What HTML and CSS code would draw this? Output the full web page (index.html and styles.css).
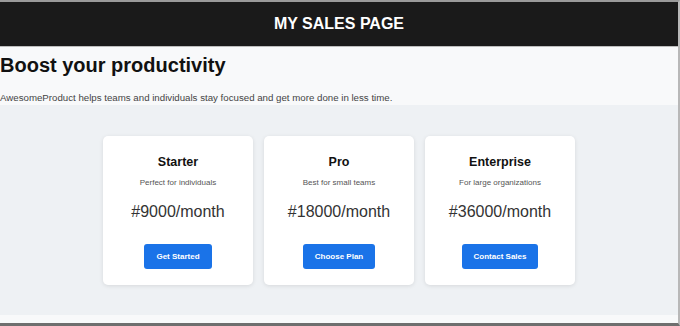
FILE: index.html
```html
<!DOCTYPE html>
<html lang="en">
<head>
<meta charset="UTF-8" />
<title>My Sales Page</title>
<link rel="stylesheet" href="styles.css">
</head>
<body>

<div class="frame">
  <header class="topbar">
    <h1>MY SALES PAGE</h1>
  </header>

  <section class="hero">
    <h2>Boost your productivity</h2>
    <p>AwesomeProduct helps teams and individuals stay focused and get more done in less time.</p>
  </section>

  <section class="pricing">
    <div class="card">
      <h3>Starter</h3>
      <p class="note">Perfect for individuals</p>
      <p class="price">#9000/month</p>
      <button>Get Started</button>
    </div>
    <div class="card">
      <h3>Pro</h3>
      <p class="note">Best for small teams</p>
      <p class="price">#18000/month</p>
      <button>Choose Plan</button>
    </div>
    <div class="card">
      <h3>Enterprise</h3>
      <p class="note">For large organizations</p>
      <p class="price">#36000/month</p>
      <button>Contact Sales</button>
    </div>
  </section>

  <footer class="strip"></footer>
</div>

</body>
</html>
```

FILE: styles.css
```css
html, body {
  margin: 0;
  padding: 0;
  background-color: #f8f9fa;
  font-family: 'Liberation Sans', Arial, sans-serif;
  color: #111;
}

.frame {
  height: 326px;
  box-sizing: border-box;
  border-top: 2px solid #9a9a9a;
  border-bottom: 3px solid #6e6e6e;
  border-right: 2px solid #b8b8b8;
  display: flex;
  flex-direction: column;
  overflow: hidden;
}

.topbar {
  background-color: #1a1a1a;
  color: white;
  height: 44px;
  display: flex;
  align-items: center;
  justify-content: center;
  border-bottom: 1px solid #bdbdbd;
}

.topbar h1 {
  margin: 0;
  font-size: 16px;
  font-weight: bold;
}

.hero {
  background-color: #f8f9fa;
  height: 58px;
  padding-top: 6px;
  box-sizing: border-box;
}

.hero h2 {
  margin: 0;
  font-size: 20px;
  font-weight: bold;
  line-height: 24px;
}

.hero p {
  margin: 15px 0 0;
  font-size: 9.7px;
  color: #444;
}

.pricing {
  background-color: #eef1f4;
  display: flex;
  justify-content: center;
  gap: 11px;
  padding: 31px 0 30px;
}

.card {
  background-color: white;
  width: 150px;
  height: 149px;
  box-sizing: border-box;
  border-radius: 5px;
  box-shadow: 0 1px 4px rgba(0, 0, 0, 0.1);
  text-align: center;
  padding-top: 19px;
}

.card h3 {
  margin: 0;
  font-size: 12.5px;
  font-weight: bold;
  line-height: 15px;
}

.note {
  margin: 8px 0 0;
  font-size: 8px;
  color: #555;
}

.price {
  margin: 16px 0 0;
  font-size: 16px;
  color: #333;
}

button {
  margin-top: 23px;
  height: 25px;
  padding: 0 12px;
  border: none;
  border-radius: 3px;
  background-color: #1a73e8;
  color: white;
  font-family: 'Liberation Sans', Arial, sans-serif;
  font-size: 8px;
  font-weight: bold;
  cursor: pointer;
}

.strip {
  flex: 1;
  background-color: #f8f9fa;
}
```
